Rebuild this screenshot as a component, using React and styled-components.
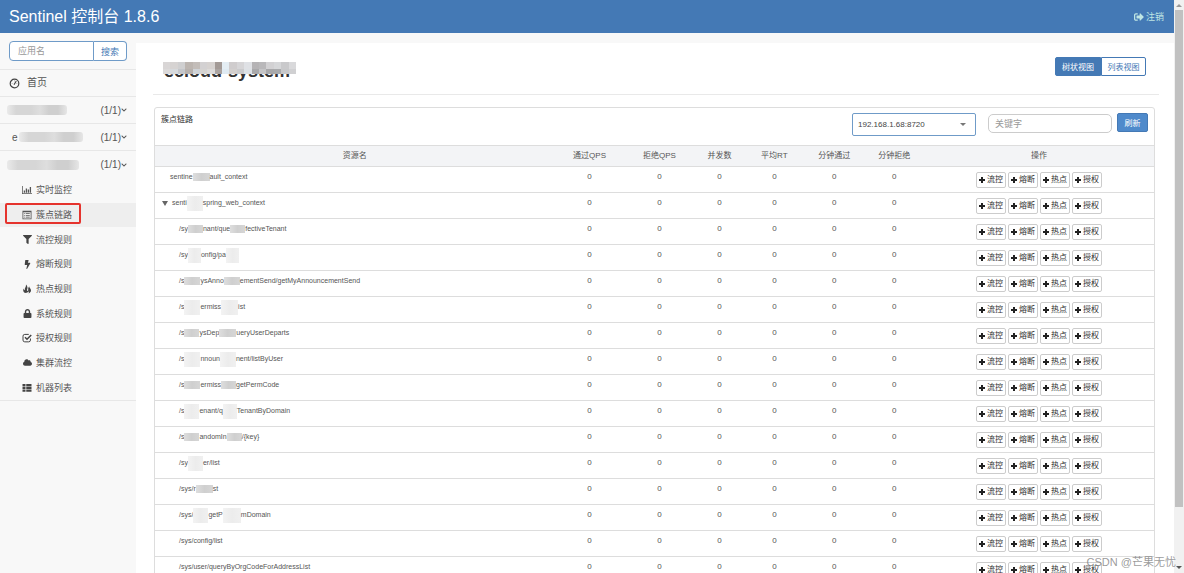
import { Fragment } from "react";
import styled, { createGlobalStyle } from "styled-components";

import {
  FaBolt,
  FaChevronDown,
  FaCloud,
  FaFilter,
  FaLock,
  FaSignOutAlt,
} from "react-icons/fa";

const DashboardIcon = () => (
  <svg width="11" height="11" viewBox="0 0 22 22" fill="none" stroke="#444">
    <circle cx="11" cy="11" r="8.6" strokeWidth="2.4" />
    <path d="M10.5 12.5L14 7" strokeWidth="2.4" strokeLinecap="round" />
    <path d="M5.5 11h1.5M11 5v1.6M15 11h1.5" strokeWidth="1" />
  </svg>
);

const ChartIcon = () => (
  <svg width="10" height="10" viewBox="0 0 20 20" fill="#555">
    <path d="M0 2h1.5v14.5H20V18H0z" />
    <path d="M3.5 11h2.6v4.5H3.5zM7.5 7h2.6v8.5H7.5zM11.5 9h2.6v6.5h-2.6zM15.5 4h2.6v11.5h-2.6z" />
  </svg>
);

const ListAltIcon = () => (
  <svg width="10" height="10" viewBox="0 0 20 20" fill="#555">
    <path d="M1 1.5h18v17H1zM2.6 4.5v12.4h14.8V4.5z" fillRule="evenodd" />
    <path d="M4.5 6.5h2v1.6h-2zM8 6.5h7.5v1.6H8zM4.5 10h2v1.6h-2zM8 10h7.5v1.6H8zM4.5 13.3h2v1.6h-2zM8 13.3h7.5v1.6H8z" />
  </svg>
);

const FireIcon = () => (
  <svg width="10" height="10" viewBox="0 0 20 20" fill="#444">
    <path d="M8 1c2.5 3 3.6 5.700 2.700 8.500-.3 1.200-1 2.300-.6 3.500.5 1.500 2.200 1.200 2.400-.3.3-2-.6-3.200.3-5.200.7-1.600 1.700-2.300 1.700-2.300 0 2.600 3.500 4.300 3.500 8 0 3-2.200 5-5 5.800 1.500-2 .4-3.400-.6-4.600-.4 2-1.700 2.900-3.600 3.200C5 18.300 3 16.500 2.500 13.500 2 11 3.500 9 3.500 9c.2 2 .8 3.200 2 3.400C4.800 8.500 8.500 6 8 1z" />
  </svg>
);

const CheckIcon = () => (
  <svg width="10" height="10" viewBox="0 0 20 20" fill="none" stroke="#444">
    <path
      d="M13.500 2.800H5.500a3.500 3.500 0 0 0-3.500 3.500v7.900a3.500 3.500 0 0 0 3.500 3.500h7.900a3.500 3.500 0 0 0 3.500-3.500V11"
      strokeWidth="2"
    />
    <path d="M6 8.500l4 4 8.500-8.500" strokeWidth="3" />
  </svg>
);

const ThListIcon = () => (
  <svg width="10" height="10" viewBox="0 0 20 20" fill="#444">
    <path d="M1 2h6v4.500H1zM8.500 2H19v4.500H8.500zM1 7.500h6V12H1zM8.500 7.500H19V12H8.500zM1 13h6v4.500H1zM8.500 13H19v4.500H8.500z" />
  </svg>
);

const PlusIcon = () => (
  <svg width="6" height="6" viewBox="0 0 6 6" fill="#222">
    <path d="M2 0h2v2h2v2H4v2H2V4H0V2h2z" />
  </svg>
);

const apps = [
  { label: "", blur: 60 },
  { label: "e", blur: 64 },
  { label: "", blur: 72 },
];

const menu = [
  { label: "实时监控", icon: <ChartIcon /> },
  { label: "簇点链路", icon: <ListAltIcon />, active: true },
  { label: "流控规则", icon: <FaFilter /> },
  { label: "熔断规则", icon: <FaBolt /> },
  { label: "热点规则", icon: <FireIcon /> },
  { label: "系统规则", icon: <FaLock /> },
  { label: "授权规则", icon: <CheckIcon /> },
  { label: "集群流控", icon: <FaCloud /> },
  { label: "机器列表", icon: <ThListIcon /> },
];

const columns = [
  { label: "资源名", width: 40 },
  { label: "通过QPS", width: 7 },
  { label: "拒绝QPS", width: 7 },
  { label: "并发数", width: 5 },
  { label: "平均RT", width: 6 },
  { label: "分钟通过", width: 6 },
  { label: "分钟拒绝", width: 6 },
  { label: "操作", width: 23 },
];

// strings are visible text, numbers are the widths of hidden parts
const resources = [
  { level: 0, parts: ["sentine", 17, "ault_context"], dark: true },
  { level: 0, parts: ["senti", 16, "spring_web_context"], open: true },
  { level: 1, parts: ["/sy", 15, "nant/que", 15, "fectiveTenant"], dark: true },
  { level: 1, parts: ["/sy", 13, "onfig/pa", 13] },
  {
    level: 1,
    parts: ["/s", 16, "ysAnno", 16, "ementSend/getMyAnnouncementSend"],
    dark: true,
  },
  { level: 1, parts: ["/s", 16, "ermiss", 17, "ist"] },
  { level: 1, parts: ["/s", 15, "ysDep", 17, "ueryUserDeparts"], dark: true },
  { level: 1, parts: ["/s", 16, "nnoun", 16, "nent/listByUser"] },
  { level: 1, parts: ["/s", 16, "ermiss", 15, "getPermCode"], dark: true },
  { level: 1, parts: ["/s", 15, "enant/q", 14, "TenantByDomain"] },
  { level: 1, parts: ["/s", 15, "andomIn", 15, "/{key}"], dark: true },
  { level: 1, parts: ["/sy", 15, "er/list"] },
  { level: 1, parts: ["/sys/r", 17, "st"], dark: true },
  { level: 1, parts: ["/sys/", 15, "getP", 18, "mDomain"] },
  { level: 1, parts: ["/sys/config/list"] },
  { level: 1, parts: ["/sys/user/queryByOrgCodeForAddressList"] },
];

const actions = ["流控", "熔断", "热点", "授权"];

const mosaic = [
  "#d9d6d6", "#d6d3d2", "#cfcfd0", "#bcb5b0", "#c3bdb9", "#d3d1d2",
  "#d6d2d0", "#a39a96", "#e4edf3", "#cfcccd", "#d6d5d7", "#dfe1e5",
  "#b5b3b5", "#b9b8ba", "#d2d1d3", "#d6d7d9", "#c9c9cb", "#d9d9db",
  "#dcdada", "#d6d9dc", "#c4c6ca", "#b7b1ad", "#cfd3d7", "#d5d3d1",
  "#dcdad9", "#aaa3a0", "#dfeaf2", "#d2cfce", "#cbcbcd", "#dde1e5",
  "#a9a9ab", "#c4c4c6", "#a8a8aa", "#a9aaac", "#c7c8ca", "#d0d0d2",
];

export default function App() {
  return (
    <Page>
      <GlobalStyle />
      <Content>
        <Header>
          <Brand>Sentinel 控制台 1.8.6</Brand>
          <Logout href="#">
            <FaSignOutAlt />
            注销
          </Logout>
        </Header>
        <Body>
          <Sidebar>
            <Search>
              <input aria-label="应用名" placeholder="应用名" />
              <button type="button">搜索</button>
            </Search>
            <Home href="#">
              <DashboardIcon />
              首页
            </Home>
            {apps.map((app, i) => (
              <AppRow href="#" key={i}>
                <AppName>
                  {app.label}
                  <AppBlur $width={app.blur} $labelled={Boolean(app.label)} />
                </AppName>
                (1/1)
                <FaChevronDown />
              </AppRow>
            ))}
            <Menu>
              {menu.map((item) => (
                <MenuItem href="#" key={item.label} $active={item.active}>
                  <MenuIcon>{item.icon}</MenuIcon>
                  {item.label}
                  {item.active && <Highlight />}
                </MenuItem>
              ))}
            </Menu>
          </Sidebar>
          <Main>
            <TitleBar>
              <Title>
                ecloud-system
                <Mosaic>
                  {mosaic.map((color, i) => (
                    <Tile key={i} $color={color} />
                  ))}
                </Mosaic>
              </Title>
              <ViewSwitch>
                <ViewButton type="button" $active>
                  树状视图
                </ViewButton>
                <ViewButton type="button">列表视图</ViewButton>
              </ViewSwitch>
            </TitleBar>
            <Card>
              <CardHeader>
                <CardTitle>簇点链路</CardTitle>
                <MachineSelect>
                  <select aria-label="机器">
                    <option>192.168.1.68:8720</option>
                  </select>
                  <svg width="6" height="3" viewBox="0 0 6 3">
                    <path d="M0 0h6L3 3z" fill="#777" />
                  </svg>
                </MachineSelect>
                <Keyword aria-label="关键字" placeholder="关键字" />
                <Refresh type="button">刷新</Refresh>
              </CardHeader>
              <Table>
                <thead>
                  <tr>
                    {columns.map((col) => (
                      <Th key={col.label} $width={col.width}>
                        {col.label}
                      </Th>
                    ))}
                  </tr>
                </thead>
                <tbody>
                  {resources.map((row, i) => (
                    <tr key={i}>
                      <NameCell $level={row.level}>
                        <Name>
                          {row.open && (
                            <svg width="6" height="5" viewBox="0 0 6 5">
                              <path d="M0 0h6L3 5z" fill="#666" />
                            </svg>
                          )}
                          {row.parts.map((part, j) => (
                            <Fragment key={j}>
                              {typeof part === "number" ? (
                                <Blur $width={part} $dark={row.dark} />
                              ) : (
                                part
                              )}
                            </Fragment>
                          ))}
                        </Name>
                      </NameCell>
                      {columns.slice(1, 7).map((col) => (
                        <Td key={col.label}>0</Td>
                      ))}
                      <Td>
                        <Actions>
                          {actions.map((action) => (
                            <ActionButton type="button" key={action}>
                              <PlusIcon />
                              {action}
                            </ActionButton>
                          ))}
                        </Actions>
                      </Td>
                    </tr>
                  ))}
                </tbody>
              </Table>
            </Card>
          </Main>
        </Body>
      </Content>
      <Scrollbar>
        <svg width="6" height="3" viewBox="0 0 6 3">
          <path d="M0 3h6L3 0z" fill="#999" />
        </svg>
        <Thumb />
        <svg width="6" height="3" viewBox="0 0 6 3">
          <path d="M0 0h6L3 3z" fill="#555" />
        </svg>
      </Scrollbar>
      <Watermark>CSDN @芒果无忧</Watermark>
    </Page>
  );
}

const GlobalStyle = createGlobalStyle`
  * {
    box-sizing: border-box;
  }
  body {
    margin: 0;
    background: #fff;
    color: #555;
    font-family: "Liberation Sans", "Noto Sans CJK SC", sans-serif;
    font-size: 8px;
  }
  a {
    color: inherit;
    text-decoration: none;
  }
  input, button, select {
    font-family: inherit;
    margin: 0;
  }
  svg {
    flex: none;
  }
`;

const Page = styled.div`
  position: relative;
  display: flex;
  height: 100vh;
  overflow: hidden;
`;

const Content = styled.div`
  flex: 1;
  min-width: 0;
  display: flex;
  flex-direction: column;
`;

const Header = styled.header`
  flex: none;
  display: flex;
  justify-content: space-between;
  align-items: center;
  height: 33px;
  padding: 0 10px 0 9px;
  background: #4479b5;
`;

const Brand = styled.div`
  font-size: 16px;
  line-height: 24px;
  color: #fff;
`;

const Logout = styled.a`
  display: flex;
  align-items: center;
  gap: 2px;
  font-size: 9px;
  color: #bfe6e4;
  svg {
    width: 10px;
    height: 10px;
  }
`;

const Body = styled.div`
  flex: 1;
  min-height: 0;
  display: flex;
  background: #f8f8f8;
`;

const Sidebar = styled.nav`
  flex: none;
  width: 136px;
`;

const Search = styled.div`
  display: flex;
  height: 36px;
  padding: 8px 9px;
  input {
    flex: 1;
    min-width: 0;
    height: 20px;
    padding: 0 8px;
    border: 1px solid #6f9bc8;
    border-radius: 4px 0 0 4px;
    background: #fff;
    font-size: 9px;
    outline: 0;
  }
  input::placeholder {
    color: #999;
  }
  button {
    width: 33px;
    height: 20px;
    padding: 0;
    border: 1px solid #6f9bc8;
    border-left: 0;
    border-radius: 0 4px 4px 0;
    background: #fff;
    color: #4479b5;
    font-size: 9px;
  }
`;

const Home = styled.a`
  display: flex;
  align-items: center;
  gap: 7px;
  height: 28px;
  padding-left: 9px;
  border-top: 1px solid #e7e7e7;
  border-bottom: 1px solid #e7e7e7;
  font-size: 10px;
  line-height: 14px;
`;

const AppRow = styled.a`
  display: flex;
  align-items: center;
  height: 27px;
  padding: 0 9px 0 7px;
  border-bottom: 1px solid #e7e7e7;
  font-size: 10px;
  &:last-of-type {
    border-bottom: 0;
  }
  svg {
    width: 6px;
    height: 6px;
  }
`;

const AppName = styled.span`
  flex: 1;
  display: flex;
  align-items: center;
  padding-left: 5px;
`;

const AppBlur = styled.span`
  width: ${({ $width }) => $width}px;
  height: 10px;
  margin-left: ${({ $labelled }) => ($labelled ? 1 : -5)}px;
  border-radius: 3px;
  background: linear-gradient(
    90deg,
    #eaeaea,
    #d6d6d6 15% 40%,
    #dedede 55%,
    #cfcfcf 70% 85%,
    #e6e6e6
  );
`;

const Menu = styled.div`
  display: grid;
  grid-template-rows: repeat(9, 1fr);
  height: 223px;
  border-bottom: 1px solid #e7e7e7;
`;

const MenuItem = styled.a`
  position: relative;
  display: flex;
  align-items: center;
  gap: 4px;
  padding-left: 22px;
  background: ${({ $active }) => ($active ? "#eee" : "transparent")};
  font-size: 9px;
  line-height: 14px;
`;

const MenuIcon = styled.span`
  display: flex;
  justify-content: center;
  width: 10px;
  color: #444;
  font-size: 9px;
`;

// red frame around the current entry
const Highlight = styled.span`
  position: absolute;
  top: 0;
  left: 5px;
  width: 76px;
  height: 21px;
  border: 2px solid #e5332d;
  border-radius: 2px;
`;

const Main = styled.main`
  flex: 1;
  min-width: 0;
  margin-top: 10px;
  padding: 0 15px 0 17px;
  background: #fff;
`;

const TitleBar = styled.div`
  display: flex;
  justify-content: space-between;
  align-items: flex-start;
  height: 52px;
  padding: 14px 13px 0 11px;
  border-bottom: 1px solid #e9e9e9;
`;

const Title = styled.h1`
  position: relative;
  margin: 0;
  font-size: 18px;
  line-height: 28px;
  color: #333;
`;

const Mosaic = styled.span`
  position: absolute;
  top: 5px;
  left: -1px;
  display: grid;
  grid-template-columns: repeat(18, 1fr);
  grid-template-rows: 7px 5px;
  width: 133px;
`;

const Tile = styled.span`
  background: ${({ $color }) => $color};
`;

const ViewSwitch = styled.div`
  display: flex;
`;

const ViewButton = styled.button`
  width: ${({ $active }) => ($active ? 46 : 45)}px;
  height: 19px;
  padding: 0;
  border: 1px solid #4479b5;
  border-radius: ${({ $active }) => ($active ? "2px 0 0 2px" : "0 2px 2px 0")};
  background: ${({ $active }) => ($active ? "#4479b5" : "#fff")};
  color: ${({ $active }) => ($active ? "#fff" : "#4479b5")};
  font-size: 8px;
`;

const Card = styled.section`
  margin: 12px 4px 0 1px;
  border: 1px solid #ddd;
  border-radius: 3px;
`;

const CardHeader = styled.div`
  display: flex;
  align-items: flex-start;
  height: 37px;
  padding: 5px 6px;
`;

const CardTitle = styled.div`
  flex: 1;
  font-size: 8px;
  line-height: 14px;
  color: #333;
`;

const MachineSelect = styled.div`
  display: grid;
  align-items: center;
  width: 124px;
  margin-right: 12px;
  select,
  svg {
    grid-area: 1 / 1;
  }
  select {
    appearance: none;
    height: 23px;
    padding: 0 5px;
    border: 1px solid #6f9bc8;
    border-radius: 2px;
    background: #fff;
    color: #444;
    font-size: 8px;
  }
  svg {
    justify-self: end;
    margin-right: 10px;
    pointer-events: none;
  }
`;

const Keyword = styled.input`
  width: 124px;
  height: 19px;
  margin: 1px 5px 0 0;
  padding: 0 6px;
  border: 1px solid #ccc;
  border-radius: 5px;
  font-size: 9px;
  &::placeholder {
    color: #999;
  }
`;

const Refresh = styled.button`
  width: 31px;
  height: 19px;
  padding: 0;
  border: 1px solid #4479b5;
  border-radius: 2px;
  background: #4f8acb;
  color: #fff;
  font-size: 8px;
`;

const Table = styled.table`
  width: 100%;
  table-layout: fixed;
  border-collapse: collapse;
`;

const Th = styled.th`
  width: ${({ $width }) => $width}%;
  height: 21px;
  padding: 0;
  border-top: 1px solid #ddd;
  border-bottom: 1px solid #ddd;
  background: #f3f4f6;
  font-size: 8px;
  font-weight: normal;
  line-height: 12px;
`;

const Td = styled.td`
  height: 26px;
  padding: 5px 0 4px;
  border-bottom: 1px solid #ddd;
  font-size: 8px;
  line-height: 10px;
  text-align: center;
  vertical-align: top;
`;

const NameCell = styled(Td)`
  padding-left: ${({ $level }) => ($level ? 24 : 15)}px;
  font-size: 7px;
`;

const Name = styled.div`
  display: flex;
  align-items: center;
  height: 10px;
  white-space: pre;
  svg {
    margin: 0 4px 0 -8px;
  }
`;

const Blur = styled.span`
  flex: none;
  width: ${({ $width }) => $width}px;
  height: ${({ $dark }) => ($dark ? 8 : 15)}px;
  background: ${({ $dark }) =>
    $dark
      ? "linear-gradient(90deg, #dedede, #cfcfcf 50%, #d6d6d6)"
      : "linear-gradient(90deg, #f3f3f3, #ececec 50%, #f0f0f0)"};
`;

const Actions = styled.div`
  display: flex;
  justify-content: center;
  gap: 2px;
`;

const ActionButton = styled.button`
  display: flex;
  justify-content: center;
  align-items: center;
  gap: 2px;
  width: 30px;
  height: 16px;
  padding: 0;
  border: 1px solid #ccc;
  border-radius: 2px;
  background: #fff;
  color: #333;
  font-size: 8px;
  line-height: 10px;
`;

const Scrollbar = styled.div`
  flex: none;
  display: flex;
  flex-direction: column;
  align-items: center;
  justify-content: space-between;
  width: 10px;
  padding: 4px 0;
  background: #f1f1f1;
`;

const Thumb = styled.div`
  width: 8px;
  height: 88%;
  margin: 3px 0 auto;
  background: #c1c1c1;
`;

const Watermark = styled.div`
  position: absolute;
  right: 8px;
  bottom: 3px;
  font-size: 11px;
  line-height: 16px;
  color: rgba(120, 120, 120, 0.75);
`;
